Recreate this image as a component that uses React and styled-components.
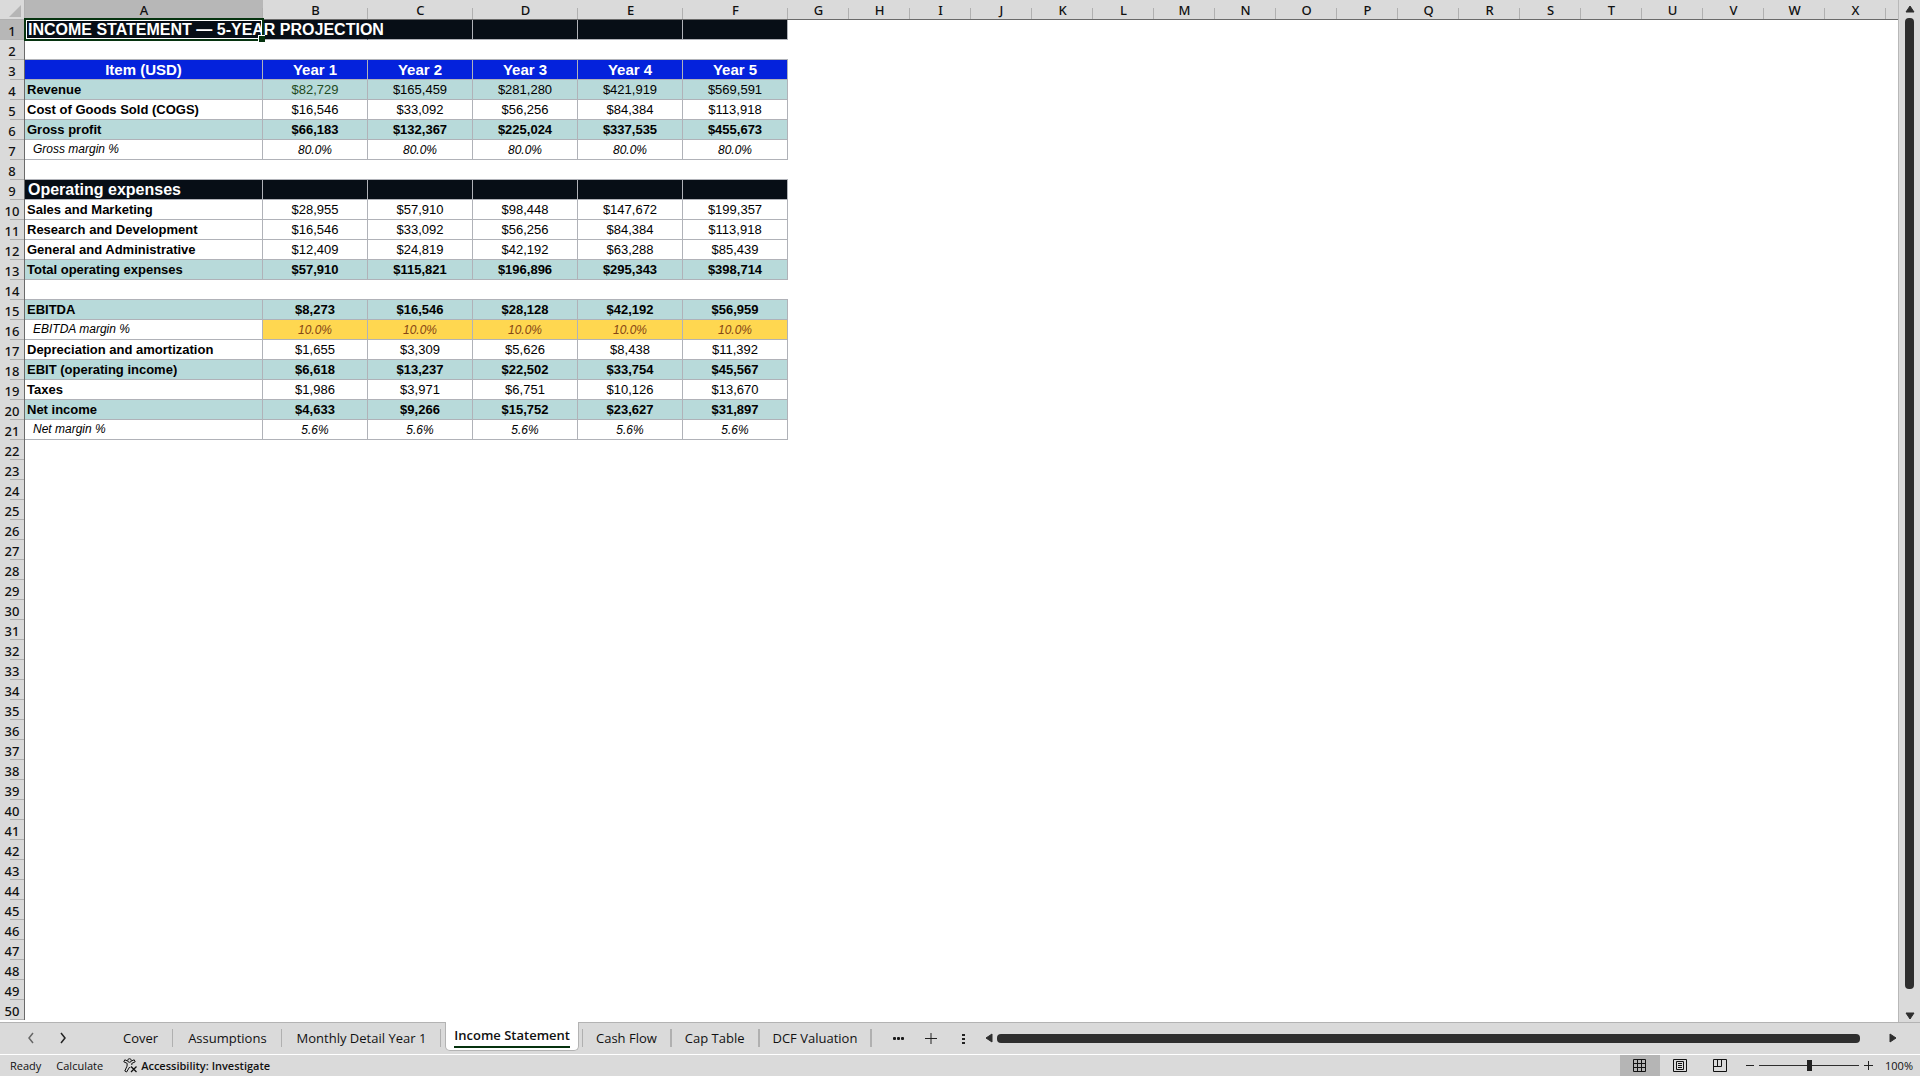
import styled, { createGlobalStyle, css } from "styled-components";

const GlobalStyle = createGlobalStyle`
    * {
        box-sizing: border-box;
    }
    body {
        margin: 0;
        background: #dadada;
        font-family: "Open Sans", "Noto Sans", sans-serif;
        color: #111;
    }
    button {
        font: inherit;
        color: inherit;
        border: none;
        background: none;
        padding: 0;
    }
`;

const Page = styled.div`
    height: 100vh;
    display: flex;
    flex-direction: column;
    overflow: hidden;
`;

const Workspace = styled.main`
    flex: 1;
    min-height: 0;
    display: flex;
`;

const SheetArea = styled.div`
    flex: 1;
    min-width: 0;
    overflow: hidden;
    background: #fff;
    border-right: 1px solid #b8b8b8;
`;

const Sheet = styled.table`
    width: 100%;
    table-layout: fixed;
    border-collapse: separate;
    border-spacing: 0;
    font-family: "Liberation Sans", Arial, sans-serif;
    font-size: 13px;
    line-height: 19px;
`;

const Col = styled.col`
    width: ${props => props.$w ? `${props.$w}px` : 'auto'};
`;

const HeadCell = styled.th`
    height: 20px;
    padding: 2px 0 0;
    font-family: "Noto Sans", "Open Sans", sans-serif;
    font-size: 13px;
    font-weight: 500;
    line-height: 17px;
    color: #111;
    background-color: ${props => props.$active ? '#b7b7b7' : '#dadada'};
`;

const ColumnHead = styled(HeadCell)`
    border-bottom: 1px solid #6a6a6a;
    background-image: linear-gradient(#b0b0b0, #b0b0b0);
    background-size: ${props => props.$last ? '0 0' : '1px 11px'};
    background-position: right bottom;
    background-repeat: no-repeat;
`;

const RowHead = styled(HeadCell)`
    border-right: 1px solid #6a6a6a;
    background-image: linear-gradient(#b0b0b0, #b0b0b0);
    background-size: 14px 1px;
    background-position: right bottom;
    background-repeat: no-repeat;
`;

const Corner = styled(HeadCell)`
    padding: 0;
    border-bottom: 1px solid #b0b0b0;
    border-right: 1px solid #b0b0b0;

    svg {
        display: block;
        margin: 2px 0 0 9px;
    }
`;

const looks = {
    title: css`
        padding-left: 3px;
        background-color: #070e16;
        color: #fff;
        font-size: 16px;
        font-weight: bold;
    `,
    head: css`
        background-color: #0422dc;
        color: #fff;
        font-size: 15px;
        font-weight: bold;
        text-align: center;
    `,
    total: css`
        background-color: #b8dada;
    `,
    input: css`
        background-color: #ffd750;
        color: #854514;
    `,
};

const Cell = styled.td`
    height: 20px;
    padding: 0 2px;
    white-space: nowrap;
    color: #000;
    text-align: ${props => props.$label ? 'left' : 'center'};
    font-weight: ${props => props.$bold ? 'bold' : 'normal'};
    border-bottom: 1px solid #b0b2b8;
    border-right: 1px solid ${props => props.$open ? 'transparent' : '#b0b2b8'};
    ${props => !props.$label && css`
        padding-top: 1px;
        line-height: 18px;
    `}
    ${props => props.$italic && css`
        font-size: 12px;
        font-style: italic;
    `}
    ${props => looks[props.$look]}
    ${props => props.$green && css`color: #1f4a22;`}
    ${props => props.$indent && css`padding-left: 8px;`}
    ${props => props.$selected && css`position: relative;`}
`;

const GapCell = styled.td`
    height: 20px;
    padding: 0;
    border-bottom: 1px solid #b0b2b8;
`;

const EmptyCell = styled.td`
    height: 20px;
    padding: 0;
`;

const Selection = styled.span`
    position: absolute;
    inset: -2px -2px -2px -1px;
    border: 2px solid #06330f;
    box-shadow: inset 0 0 0 1px #fff;

    &::after {
        content: "";
        position: absolute;
        right: -3px;
        bottom: -3px;
        width: 6px;
        height: 6px;
        background: #06330f;
        border-top: 1px solid #fff;
        border-left: 1px solid #fff;
    }
`;

const SideScroll = styled.div`
    width: 21px;
    padding: 5px 0 2px;
    display: flex;
    flex-direction: column;
    align-items: center;
    gap: 5px;
`;

const SideThumb = styled.div`
    flex: 1;
    width: 9px;
    margin-bottom: 18px;
    border-radius: 4px;
    background: #2e2e2e;
`;

const ArrowButton = styled.button`
    display: flex;
    align-items: center;
    justify-content: center;
`;

const TabBar = styled.nav`
    height: 33px;
    display: flex;
    align-items: flex-start;
    background: #dadada;
    border-top: 1px solid #b3b3b3;
    border-bottom: 1px solid #fff;
    font-size: 13px;
    font-weight: 500;
`;

const SheetArrows = styled.div`
    height: 30px;
    width: 108px;
    padding-left: 24px;
    display: flex;
    align-items: center;
    gap: 18px;
`;

const Tab = styled.button`
    height: 30px;
    padding: ${props => props.$tight ? '0 13px' : '0 14px 0 15px'};
    line-height: 30px;
    white-space: nowrap;
`;

const ActiveTab = styled(Tab)`
    height: 29px;
    margin: -1px 3px 0 4px;
    padding: 0 8px;
    background: #fff;
    border: 1px solid #b3b3b3;
    border-top: none;
    border-radius: 0 0 5px 5px;
    font-weight: 600;

    span {
        display: block;
        line-height: 22px;
        border-bottom: 2px solid #06330f;
    }
`;

const Divider = styled.span`
    width: ${props => props.$wide ? '2px' : '1px'};
    height: 18px;
    margin-top: 6px;
    background: #b0b0b0;
`;

const TabTools = styled.div`
    height: 30px;
    padding: 0 16px 0 21px;
    display: flex;
    align-items: center;
    gap: 20px;
`;

const BottomScroll = styled.div`
    flex: 1;
    height: 30px;
    padding-right: 23px;
    display: flex;
    align-items: center;
    gap: 4px;
`;

const BottomThumb = styled.div`
    flex: 1;
    height: 9px;
    margin-right: 25px;
    border-radius: 4px;
    background: #2e2e2e;
`;

const StatusBar = styled.footer`
    height: 21px;
    padding: 0 7px 0 10px;
    display: flex;
    align-items: center;
    background: #dadada;
    font-size: 11px;
    font-weight: 500;
`;

const StatusText = styled.span`
    margin-right: 15px;
`;

const AccessButton = styled.button`
    display: flex;
    align-items: center;
    gap: 3px;
    margin-left: 5px;
    font-weight: 600;
`;

const ViewButton = styled.button`
    width: 40px;
    height: 21px;
    display: flex;
    align-items: center;
    justify-content: center;
    background: ${props => props.$on ? '#b5b5b5' : 'none'};
`;

const Views = styled.div`
    display: flex;
    margin-left: auto;
`;

const ZoomGroup = styled.div`
    display: flex;
    align-items: center;
    gap: 5px;
    padding-left: 5px;
`;

const ZoomSlider = styled.input`
    appearance: none;
    width: 100px;
    height: 12px;
    margin: 0;
    background: linear-gradient(#2e2e2e, #2e2e2e) center / 100% 1px no-repeat;

    &::-webkit-slider-thumb {
        appearance: none;
        width: 5px;
        height: 11px;
        background: #222;
    }
`;

const ZoomValue = styled.button`
    margin-left: 7px;
    min-width: 28px;
`;

const columns = 'ABCDEFGHIJKLMNOPQRSTUVWX'.split('');
const years = ['Year 1', 'Year 2', 'Year 3', 'Year 4', 'Year 5'];
const none = ['', '', '', '', ''];

const rows = {
    1: { label: 'INCOME STATEMENT — 5-YEAR PROJECTION', values: none, look: 'title' },
    2: { gap: true },
    3: { label: 'Item (USD)', values: years, look: 'head' },
    4: { label: 'Revenue', values: ['$82,729', '$165,459', '$281,280', '$421,919', '$569,591'], look: 'total' },
    5: { label: 'Cost of Goods Sold (COGS)', values: ['$16,546', '$33,092', '$56,256', '$84,384', '$113,918'] },
    6: { label: 'Gross profit', values: ['$66,183', '$132,367', '$225,024', '$337,535', '$455,673'], look: 'total', bold: true },
    7: { label: 'Gross margin %', values: ['80.0%', '80.0%', '80.0%', '80.0%', '80.0%'], italic: true },
    8: { gap: true },
    9: { label: 'Operating expenses', values: none, look: 'title' },
    10: { label: 'Sales and Marketing', values: ['$28,955', '$57,910', '$98,448', '$147,672', '$199,357'] },
    11: { label: 'Research and Development', values: ['$16,546', '$33,092', '$56,256', '$84,384', '$113,918'] },
    12: { label: 'General and Administrative', values: ['$12,409', '$24,819', '$42,192', '$63,288', '$85,439'] },
    13: { label: 'Total operating expenses', values: ['$57,910', '$115,821', '$196,896', '$295,343', '$398,714'], look: 'total', bold: true },
    14: { gap: true },
    15: { label: 'EBITDA', values: ['$8,273', '$16,546', '$28,128', '$42,192', '$56,959'], look: 'total', bold: true },
    16: { label: 'EBITDA margin %', values: ['10.0%', '10.0%', '10.0%', '10.0%', '10.0%'], italic: true, valueLook: 'input' },
    17: { label: 'Depreciation and amortization', values: ['$1,655', '$3,309', '$5,626', '$8,438', '$11,392'] },
    18: { label: 'EBIT (operating income)', values: ['$6,618', '$13,237', '$22,502', '$33,754', '$45,567'], look: 'total', bold: true },
    19: { label: 'Taxes', values: ['$1,986', '$3,971', '$6,751', '$10,126', '$13,670'] },
    20: { label: 'Net income', values: ['$4,633', '$9,266', '$15,752', '$23,627', '$31,897'], look: 'total', bold: true },
    21: { label: 'Net margin %', values: ['5.6%', '5.6%', '5.6%', '5.6%', '5.6%'], italic: true },
};

const Triangle = ({ points, w, h }) => (
    <svg width={w} height={h} viewBox={`0 0 ${w} ${h}`}>
        <polygon points={points} fill="#2e2e2e" stroke="#2e2e2e" strokeLinejoin="round" />
    </svg>
);

const Chevron = ({ d, color }) => (
    <svg width="14" height="14" viewBox="0 0 14 14" fill="none" stroke={color} strokeWidth="1.5">
        <path d={d} />
    </svg>
);

const SheetRow = ({ number }) => {
    const row = rows[number];
    const selected = number === 1;

    return (
        <tr>
            <RowHead scope="row" $active={selected}>{number}</RowHead>
            {!row && <EmptyCell colSpan={25} />}
            {row && row.gap && <><GapCell colSpan={6} /><EmptyCell colSpan={19} /></>}
            {row && !row.gap && (
                <>
                    <Cell
                        $label
                        $bold={!row.italic}
                        $italic={row.italic}
                        $indent={row.italic}
                        $look={row.look}
                        $selected={selected}
                    >
                        {row.label}
                        {selected && <Selection />}
                    </Cell>
                    {row.values.map((value, index) => (
                        <Cell
                            key={index}
                            $bold={row.bold}
                            $italic={row.italic}
                            $look={row.valueLook || row.look}
                            $green={number === 4 && index === 0}
                            $open={selected && index === 0}
                        >
                            {value}
                        </Cell>
                    ))}
                    <EmptyCell colSpan={19} />
                </>
            )}
        </tr>
    );
};

const Spreadsheet = () => (
    <SheetArea>
        <Sheet>
            <colgroup>
                <Col $w={25} />
                <Col $w={238} />
                {years.map(year => <Col key={year} $w={105} />)}
                {columns.slice(6).map(letter => <Col key={letter} $w={61} />)}
                <Col />
            </colgroup>
            <thead>
                <tr>
                    <Corner>
                        <svg width="12" height="12" viewBox="0 0 12 12"><polygon points="12,0 12,12 0,12" fill="#b5b5b5" /></svg>
                    </Corner>
                    {columns.map(letter => (
                        <ColumnHead key={letter} scope="col" $active={letter === 'A'}>{letter}</ColumnHead>
                    ))}
                    <ColumnHead $last />
                </tr>
            </thead>
            <tbody>
                {Array.from({ length: 50 }, (_, i) => <SheetRow key={i} number={i + 1} />)}
            </tbody>
        </Sheet>
    </SheetArea>
);

const Tabs = () => (
    <TabBar>
        <SheetArrows>
            <ArrowButton aria-label="Previous sheet"><Chevron d="M9 2 L5 7 L9 12" color="#666" /></ArrowButton>
            <ArrowButton aria-label="Next sheet"><Chevron d="M5 2 L9 7 L5 12" color="#222" /></ArrowButton>
        </SheetArrows>
        <Tab>Cover</Tab>
        <Divider />
        <Tab>Assumptions</Tab>
        <Divider />
        <Tab>Monthly Detail Year 1</Tab>
        <Divider />
        <ActiveTab><span>Income Statement</span></ActiveTab>
        <Divider />
        <Tab $tight>Cash Flow</Tab>
        <Divider $wide />
        <Tab $tight>Cap Table</Tab>
        <Divider $wide />
        <Tab $tight>DCF Valuation</Tab>
        <Divider $wide />
        <TabTools>
            <ArrowButton aria-label="More sheets">
                <svg width="12" height="12" viewBox="0 0 12 12" fill="#1a1a1a">
                    <rect x="0" y="5" width="3" height="3" rx="1" />
                    <rect x="4" y="5" width="3" height="3" rx="1" />
                    <rect x="8" y="5" width="3" height="3" rx="1" />
                </svg>
            </ArrowButton>
            <ArrowButton aria-label="New sheet">
                <svg width="12" height="12" viewBox="0 0 12 12" stroke="#222">
                    <path d="M0 6.5H12M6 1V12" />
                </svg>
            </ArrowButton>
            <ArrowButton aria-label="Resize tabs">
                <svg width="12" height="12" viewBox="0 0 12 12" fill="#222">
                    <path d="M5 2h3v2h-3zM5 6h3v2h-3zM5 10h3v2h-3z" />
                </svg>
            </ArrowButton>
        </TabTools>
        <BottomScroll>
            <ArrowButton aria-label="Scroll left"><Triangle w={8} h={10} points="7,1 7,9 1,5" /></ArrowButton>
            <BottomThumb />
            <ArrowButton aria-label="Scroll right"><Triangle w={8} h={10} points="1,1 1,9 7,5" /></ArrowButton>
        </BottomScroll>
    </TabBar>
);

const Status = () => (
    <StatusBar>
        <StatusText>Ready</StatusText>
        <StatusText>Calculate</StatusText>
        <AccessButton>
            <svg width="15" height="15" viewBox="0 0 15 15" fill="none" stroke="#111">
                <circle cx="6.5" cy="2.5" r="1.8" />
                <path d="M4.6 3 L1.8 1.8 L.8 3.8 L4.2 5.4 L4 8.2 L1.8 13 L3.6 14 L6.5 9.2 L7.2 10 M8.4 3 L11.2 1.8 L12.2 3.8 L8.8 5.4 L8.8 7" />
                <path d="M8 8.5 L13.5 14 M13.5 8.5 L8 14" strokeWidth="1.3" />
            </svg>
            Accessibility: Investigate
        </AccessButton>
        <Views>
            <ViewButton $on aria-label="Normal view">
                <svg width="14" height="14" viewBox="0 0 14 14" fill="none" stroke="#111">
                    <path d="M.5 .5H12.5V12.5H.5zM.5 4.5H12.5M.5 8.5H12.5M4.5 .5V12.5M8.5 .5V12.5" />
                </svg>
            </ViewButton>
            <ViewButton aria-label="Page layout view">
                <svg width="14" height="14" viewBox="0 0 14 14" fill="none" stroke="#111">
                    <path d="M.5 .5H13.5V12.5H.5zM3.5 2.5H10.5V10.5H3.5zM5 4.5H9M5 6.5H9M5 8.5H9" />
                </svg>
            </ViewButton>
            <ViewButton aria-label="Page break preview">
                <svg width="14" height="14" viewBox="0 0 14 14" fill="none" stroke="#111">
                    <path d="M.5 .5H13.5V12.5H.5zM.5 7.5H8.5V.5M4.5 .5V7.5" />
                </svg>
            </ViewButton>
        </Views>
        <ZoomGroup>
            <ArrowButton aria-label="Zoom out">
                <svg width="9" height="9" viewBox="0 0 9 9" stroke="#222"><path d="M1 4.5H9" /></svg>
            </ArrowButton>
            <ZoomSlider type="range" min="10" max="190" defaultValue="100" aria-label="Zoom" />
            <ArrowButton aria-label="Zoom in">
                <svg width="9" height="9" viewBox="0 0 9 9" stroke="#222"><path d="M0 4.5H9M4.5 0V9" /></svg>
            </ArrowButton>
            <ZoomValue>100%</ZoomValue>
        </ZoomGroup>
    </StatusBar>
);

export default function App() {
    return (
        <Page>
            <GlobalStyle />
            <Workspace>
                <Spreadsheet />
                <SideScroll>
                    <ArrowButton aria-label="Scroll up"><Triangle w={10} h={8} points="1,7 9,7 5,1" /></ArrowButton>
                    <SideThumb />
                    <ArrowButton aria-label="Scroll down"><Triangle w={10} h={8} points="1,1 9,1 5,7" /></ArrowButton>
                </SideScroll>
            </Workspace>
            <Tabs />
            <Status />
        </Page>
    );
}
